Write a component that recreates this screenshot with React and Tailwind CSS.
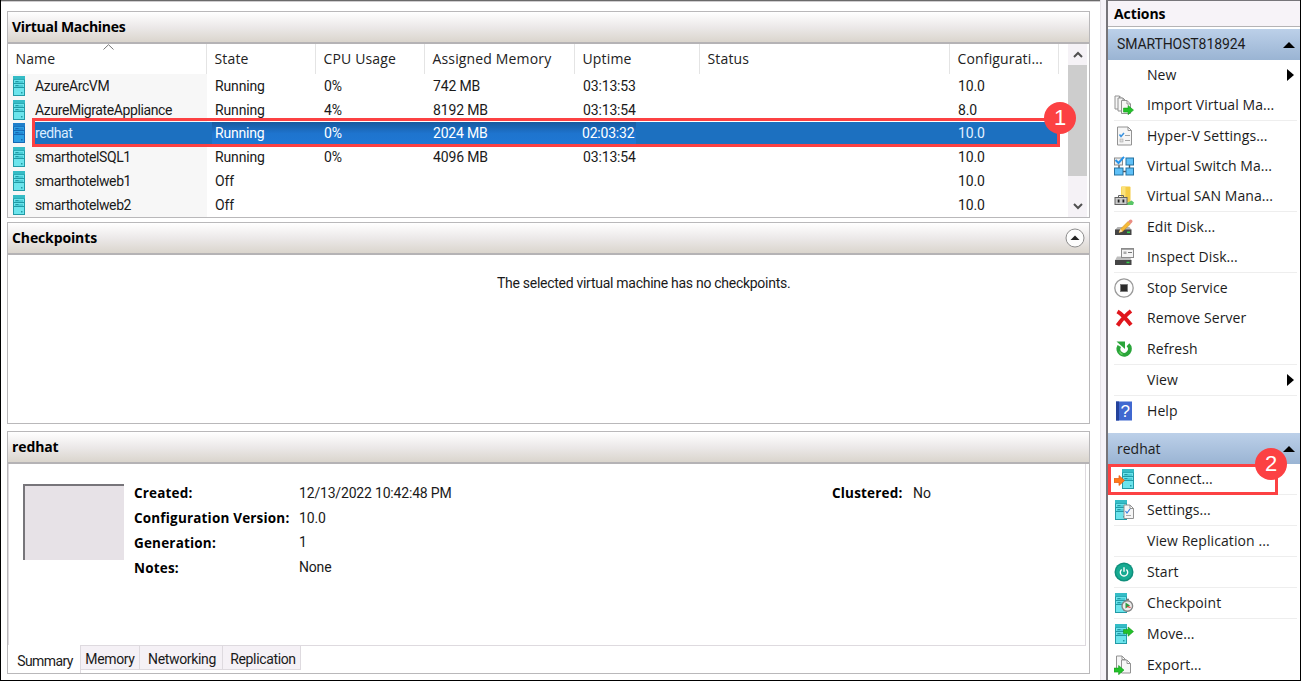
import React from "react";

const UI = "font-['Open_Sans','Noto_Sans',sans-serif]";
const GRID = "font-['Roboto','Liberation_Sans',sans-serif]";

function Server({ x = 3.5, selected = false }) {
  const body = selected ? "#2c9fe4" : "#6ce4ec";
  const top = selected ? "#1f7fcb" : "#35bcc6";
  const edge = selected ? "#1568b4" : "#229aa6";
  const slot = selected ? "#2389d4" : "#4accd6";
  return (
    <g transform={`translate(${x} 0)`}>
      <rect x="0" y="0" width="12" height="20" fill={edge} />
      <rect x="0" y="0" width="12" height="3.5" fill={top} />
      <rect x="1" y="4" width="10" height="15" fill={body} />
      <rect x="2" y="5" width="8" height="2" fill={slot} />
      <rect x="2" y="9" width="8" height="2" fill={slot} />
      <path d="M1 7.5h10M1 11.5h10" stroke={edge} strokeWidth="1" />
      <path d="M2.5 5.500h3M2.5 9.500h3" stroke={edge} strokeWidth="1" />
      <rect x="8" y="16" width="1.5" height="1.5" fill={edge} />
    </g>
  );
}

function Sheet({ x = 0, y = 0, w = 11, h = 14 }) {
  return (
    <path
      transform={`translate(${x} ${y})`}
      d={`M.5.5H${w - 4}L${w - 0.5} 4V${h - 0.5}H.5ZM${w - 4} .5V4H${w - 0.5}`}
      fill="#f6f6f6"
      stroke="#929292"
      strokeWidth="1"
    />
  );
}

const GreenArrow = ({ x, y }) => (
  <path transform={`translate(${x} ${y})`} d="M0 2.6H4.600V0L10 4.600L4.600 9.200V6.600H0Z" fill="#23c129" stroke="#139a1b" strokeWidth=".6" />
);

const ICONS = {
  import: (
    <>
      <Sheet x={0.5} y={0.5} w={9} h={14} />
      <Sheet x={3.5} y={2.5} w={9.5} h={14} />
      <Sheet x={7} y={5} w={10} h={14} />
      <GreenArrow x={9.5} y={10.500} />
    </>
  ),
  hyperv: (
    <>
      <Sheet x={3} y={0.5} w={15} h={19} />
      <path d="M5.5 8.500l1.500 2 3-3.500" fill="none" stroke="#3a93e0" strokeWidth="1.500" />
      <path d="M11 9.500h5M11 14.500h5" stroke="#a4a4a4" />
      <rect x="6" y="13" width="3" height="3" fill="#ddd" stroke="#aaa" strokeWidth=".6" />
    </>
  ),
  vswitch: (
    <>
      <path d="M9 15.500h3M15.500 9v4M5 9v4" stroke="#555" strokeWidth="1.400" />
      <rect x=".5" y="2" width="8" height="7" fill="#eee" stroke="#8b8b8b" />
      <path d="M1.500 4l3 3L10 .8" fill="none" stroke="#2593ea" strokeWidth="2" />
      <rect x="12" y="2" width="7.500" height="7" fill="#5fc0f7" stroke="#27729f" />
      <rect x=".5" y="12" width="8.500" height="7" fill="#5fc0f7" stroke="#27729f" />
      <rect x="12" y="12" width="7.500" height="7" fill="#5fc0f7" stroke="#27729f" />
    </>
  ),
  san: (
    <>
      <rect x="7" y=".5" width="9.500" height="16" rx="1" fill="#f5cc45" />
      <rect x="7.500" y=".5" width="4" height="16" fill="#fbe27c" />
      <path d="M13 17l4.500-2.500 2.500 2-1 2.500H13z" fill="#58c566" />
      <rect x="1" y="11.500" width="12" height="7" fill="#c9c9c9" stroke="#626262" />
      <path d="M4.500 11.500v-2h5v2" fill="none" stroke="#626262" />
      <path d="M4.600 13.500v3M9.400 13.500v3" stroke="#222" strokeWidth="1.800" />
    </>
  ),
  edit: (
    <>
      <path d="M3.500 10h12l2 3H1z" fill="#b3b3b3" />
      <rect x="1" y="12.500" width="16.500" height="5.500" fill="#454545" />
      <rect x="13" y="14.500" width="3" height="1.600" fill="#35d44b" />
      <path d="M5 15.500l1.500-3.500L14 4.500l2.500 2.500-8 7.500z" fill="#f6b936" stroke="#c98b1c" strokeWidth=".5" />
      <path d="M14 4.500l1.500-1.500a1.700 1.700 0 0 1 2.500 2.500L16.500 7z" fill="#ea8d83" />
      <path d="M5 15.500l1.500-3.500 2 2.500z" fill="#f6e3bd" />
    </>
  ),
  inspect: (
    <>
      <path d="M3 9.500h13l1.500 4H1z" fill="#bdbdbd" />
      <rect x="7.500" y="1.500" width="12" height="9" fill="#f5f5f5" stroke="#8b8b8b" />
      <path d="M7 2h13" stroke="#8b8b8b" strokeWidth="1.500" />
      <rect x="9.500" y="4.500" width="3" height="2.500" fill="#aaa" />
      <path d="M14 5.500h4" stroke="#777" />
      <rect x="1" y="13" width="16.500" height="5" fill="#454545" />
      <rect x="12.500" y="14.700" width="3" height="1.500" fill="#35d44b" />
    </>
  ),
  stop: (
    <>
      <circle cx="10" cy="10" r="9.200" fill="#fdfdfd" stroke="#9a9a9a" strokeWidth="1.300" />
      <rect x="6.500" y="6.500" width="7" height="7" fill="#2b2b2b" stroke="#777" strokeWidth=".8" />
    </>
  ),
  remove: <path d="M3.500 3.500C7 5.500 13 12 17 17M17 3C13 6 7 12.500 3.500 17.500" fill="none" stroke="#e0161c" strokeWidth="4" />,
  refresh: (
    <>
      <path d="M5.300 7A5.700 5.700 0 1 0 14 5.800" fill="none" stroke="#2aa53a" strokeWidth="4" />
      <path d="M2.500 2.500h8.500v7.500z" fill="#2aa53a" />
      <path d="M5.500 12.500a5 5 0 0 0 3 3" fill="none" stroke="#62cf5e" strokeWidth="1.500" />
    </>
  ),
  help: (
    <>
      <rect x="2" y=".5" width="16" height="19" fill="#4068d0" />
      <rect x="2" y=".5" width="3" height="19" fill="#24429b" />
      <text x="11.300" y="16" textAnchor="middle" fontSize="17" fontFamily="Liberation Sans" fill="#fff">?</text>
    </>
  ),
  connect: (
    <>
      <Server x={8} />
      <path d="M0 9.500H5V6.500L10.500 11.500 5 16.500V13.500H0Z" fill="#ff7a1a" stroke="#e2570c" strokeWidth=".7" />
    </>
  ),
  settings: (
    <>
      <Server x={1} />
      <Sheet x={9.500} y={4.500} w={10.500} h={14.500} />
      <path d="M11.500 11l1.500 2 3-4" fill="none" stroke="#3a80e0" strokeWidth="1.200" />
      <path d="M12 15.500h5" stroke="#aaa" />
    </>
  ),
  start: (
    <>
      <circle cx="10" cy="10" r="9.500" fill="#0f8f7c" />
      <circle cx="10" cy="10" r="8" fill="#17ab92" />
      <path d="M7.600 7.500a3.700 3.700 0 1 0 4.800 0M10 5.300v4.500" fill="none" stroke="#fff" strokeWidth="1.400" />
    </>
  ),
  checkpoint: (
    <>
      <Server x={1} />
      <circle cx="13.300" cy="13" r="5.300" fill="#ececec" stroke="#858585" strokeWidth="1.400" />
      <path d="M12 6.500h3" stroke="#777" strokeWidth="1.600" />
      <path d="M11.500 9.500v6l4.500-3z" fill="#2c9c40" />
      <path d="M13 13.500l3.500 1" stroke="#d33" strokeWidth="1.300" />
    </>
  ),
  move: (
    <>
      <Server x={1} />
      <GreenArrow x={9.500} y={3} />
    </>
  ),
  export: (
    <>
      <Sheet x={2} y={0.5} w={10} h={14} />
      <Sheet x={7} y={4.500} w={10} h={14} />
      <GreenArrow x={0} y={10.500} />
    </>
  ),
};

const Icon = ({ name }) => (
  <svg className="block h-5 w-5" viewBox="0 0 20 20">
    {ICONS[name]}
  </svg>
);

function Action({ label, icon, arrow }) {
  return (
    <div className="flex min-h-0 flex-1 items-center">
      <div className="ml-[6px] w-[33px] shrink-0">{icon && <Icon name={icon} />}</div>
      <span className="text-[14px] leading-5 tracking-[0.08px] whitespace-pre text-[#1c1c1c]">{label}</span>
      {arrow && (
        <svg className="mr-[6px] ml-auto h-3 w-[7px]" viewBox="0 0 7 12">
          <path d="M0 0L7 6L0 12Z" fill="#000" />
        </svg>
      )}
    </div>
  );
}

const Group = ({ items, height, last }) => (
  <div className={`flex shrink-0 flex-col ${height}`}>
    {items.map((item) => (
      <Action key={item.label} {...item} />
    ))}
    {!last && <div className="mr-[3px] ml-[6px] h-px shrink-0 bg-[#eeeeee]" />}
  </div>
);

const SectionTitle = ({ children, height }) => (
  <div className={`flex shrink-0 items-center justify-between bg-linear-to-b from-[#bcd0e9] to-[#9ab4d3] pr-[5px] pl-[9px] text-[14px] text-[#1c1c1c] ${height}`}>
    {children}
    <svg className="h-[6px] w-3" viewBox="0 0 12 6">
      <path d="M6 0L12 6H0Z" fill="#000" />
    </svg>
  </div>
);

const PanelTitle = ({ children, height, toggle }) => (
  <div className={`flex shrink-0 items-center justify-between border-b-2 border-[#b5b3b5] bg-linear-to-b from-white via-[#ece9e9] to-[#dad5cd] pr-[4px] pb-px pl-1 text-[14px] font-bold tracking-[-0.12px] text-black ${height}`}>
    {children}
    {toggle && (
      <svg className="h-5 w-5" viewBox="0 0 20 20">
        <circle cx="10" cy="10" r="9" fill="#fdfdfd" stroke="#8e8e8e" />
        <path d="M10 7.500L14.500 12H5.500Z" fill="#222" />
      </svg>
    )}
  </div>
);

const COLS = "grid grid-cols-[199px_109px_109px_150px_125px_250px_109px]";
const HEADINGS = ["Name", "State", "CPU Usage", "Assigned Memory", "Uptime", "Status", "Configurati..."];
const VMS = [
  ["AzureArcVM", "Running", "0%", "742 MB", "03:13:53", "", "10.0"],
  ["AzureMigrateAppliance", "Running", "4%", "8192 MB", "03:13:54", "", "8.0"],
  ["redhat", "Running", "0%", "2024 MB", "02:03:32", "", "10.0"],
  ["smarthotelSQL1", "Running", "0%", "4096 MB", "03:13:54", "", "10.0"],
  ["smarthotelweb1", "Off", "", "", "", "", "10.0"],
  ["smarthotelweb2", "Off", "", "", "", "", "10.0"],
];

const GLOW = "bg-linear-to-b from-[#175a9f] via-[#1e74ce] to-[#1f78d4] text-white";
const GLOW_SHAPES = {
  1: "ml-[5px] pl-[3px] flex-1",
  2: "pl-[8px] flex-1",
  3: "pl-[8px] flex-1",
  4: "pl-[7px] w-[61px]",
};

function VmRow({ row, selected }) {
  return (
    <div className={`h-[23.8px] ${COLS}`}>
      {row.map((cell, i) => {
        if (i === 0)
          return (
            <div key={i} className="flex items-center bg-[#f7f7f7] pl-[5px]">
              <svg className="h-5 w-[13px] shrink-0" viewBox="0 0 13 20">
                <Server x={0} selected={selected} />
              </svg>
              <span className={`ml-[6px] flex h-full flex-1 items-center pt-px pl-[3px] text-[14px] tracking-[-0.39px] ${selected ? "bg-[#1c70c0] text-[#d9ecff]" : "text-[#1a1a1a]"}`}>{cell}</span>
            </div>
          );
        if (selected && GLOW_SHAPES[i])
          return (
            <div key={i} className="flex bg-[#1c70c0]">
              <span className={`flex items-center pt-px text-[14px] tracking-[-0.2px] ${GLOW} ${GLOW_SHAPES[i]}`}>{cell}</span>
            </div>
          );
        return (
          <div key={i} className={`flex items-center pt-px pl-[8px] text-[14px] tracking-[-0.15px] ${selected ? "bg-[#1c70c0] text-[#e3f1ff]" : "text-[#1a1a1a]"}`}>
            {cell}
          </div>
        );
      })}
    </div>
  );
}

const Badge = ({ children, place }) => (
  <div className={`absolute flex h-8 w-8 items-center justify-center rounded-full bg-[#fc4143] font-['Liberation_Sans',sans-serif] text-[22px] leading-none text-white ${place}`}>
    {children}
  </div>
);

const Chevron = ({ down }) => (
  <svg className="h-[7px] w-[10px]" viewBox="0 0 10 7">
    <path d={down ? "M1 1L5 5L9 1" : "M1 6L5 2L9 6"} fill="none" stroke="#505050" strokeWidth="2" />
  </svg>
);

const DETAILS = [
  ["Created:", "12/13/2022 10:42:48 PM"],
  ["Configuration Version:", "10.0"],
  ["Generation:", "1"],
  ["Notes:", "None"],
];

const TAB = "flex h-[24px] items-center justify-center border-r border-b border-[#dedadf] bg-[#f5f1f6] pt-[3px]";

const MAIN_ACTIONS = [
  { height: "h-[61px]", items: [{ label: "New", arrow: true }, { label: "Import Virtual Ma...", icon: "import" }] },
  {
    height: "h-[91px]",
    items: [
      { label: "Hyper-V Settings...", icon: "hyperv" },
      { label: "Virtual Switch Ma...", icon: "vswitch" },
      { label: "Virtual SAN Mana...", icon: "san" },
    ],
  },
  { height: "h-[61px]", items: [{ label: "Edit Disk...", icon: "edit" }, { label: "Inspect Disk...", icon: "inspect" }] },
  {
    height: "h-[92px]",
    items: [
      { label: "Stop Service", icon: "stop" },
      { label: "Remove Server", icon: "remove" },
      { label: "Refresh", icon: "refresh" },
    ],
  },
  { height: "h-[31px]", items: [{ label: "View", arrow: true }] },
  { height: "h-[37px] pb-[7px]", last: true, items: [{ label: "Help", icon: "help" }] },
];

const VM_ACTIONS = [
  { height: "h-[31px]", items: [{ label: "Connect...", icon: "connect" }] },
  { height: "h-[31px]", items: [{ label: "Settings...", icon: "settings" }] },
  { height: "h-[31px]", items: [{ label: "View Replication ..." }] },
  { height: "h-[31px]", items: [{ label: "Start", icon: "start" }] },
  { height: "h-[31px]", items: [{ label: "Checkpoint", icon: "checkpoint" }] },
  { height: "h-[61px]", last: true, items: [{ label: "Move...", icon: "move" }, { label: "Export...", icon: "export" }] },
];

export default function App() {
  return (
    <div className={`relative flex h-[681px] w-[1301px] overflow-hidden border-r border-b border-l border-black bg-white ${UI}`}>
      <main className="flex w-[1099px] shrink-0 flex-col border-t border-[#6a6a6a] pl-[6px]">
        <div className="-ml-[6px] h-px shrink-0 bg-[#cfcdcf]" />

        <section className="mt-[9px] flex h-[207px] w-[1083px] shrink-0 flex-col border border-[#b9b8ba]">
          <PanelTitle height="h-8"><span className="tracking-[-0.3px]">Virtual Machines</span></PanelTitle>
          <div className="flex min-h-0 flex-1">
            <div className="relative w-[1060px] shrink-0 overflow-hidden">
              <div className={`h-[30px] ${COLS}`}>
                {HEADINGS.map((h, i) => (
                  <div key={h} className="flex items-center border-r border-[#e4e4e4] pb-[2px] pl-[7.500px] text-[14px] tracking-[0.15px] text-[#222]">
                    {h}
                  </div>
                ))}
              </div>
              <svg className="absolute top-0 left-[95px] h-[6px] w-[11px]" viewBox="0 0 11 6">
                <path d="M.5 5.500L5.500 .7L10.500 5.500" fill="none" stroke="#777" />
              </svg>
              <div className={GRID}>
                {VMS.map((row) => (
                  <VmRow key={row[0]} row={row} selected={row[0] === "redhat"} />
                ))}
              </div>
            </div>
            <div className="mr-[2px] ml-auto flex w-[19px] flex-col items-center bg-[#f5f2f6]">
              <div className="flex h-[21px] items-center"><Chevron /></div>
              <div className="h-[111px] w-full bg-[#cdcdcd]" />
              <div className="mt-auto flex h-[21px] items-center"><Chevron down /></div>
            </div>
          </div>
        </section>

        <section className="mt-1 flex h-[202px] w-[1083px] shrink-0 flex-col border border-[#b9b8ba]">
          <PanelTitle height="h-8" toggle>Checkpoints</PanelTitle>
          <p className={`mt-[18px] pl-[489px] text-[14px] leading-5 tracking-[-0.28px] text-[#1a1a1a] ${GRID}`}>The selected virtual machine has no checkpoints.</p>
        </section>

        <section className="mt-[7px] flex h-[243px] w-[1083px] shrink-0 flex-col border border-[#b9b8ba]">
          <PanelTitle height="h-8">redhat</PanelTitle>
          <div className="mr-[3px] flex h-[182px] shrink-0 border-r border-b border-l border-[#dedadf] pt-[16px]">
            <div className="mt-[4px] ml-[14px] h-[76px] w-[101px] border-t-2 border-l-2 border-[#77757a] bg-[#e7e2e7]" />
            <dl className="ml-[10px] grid h-[100px] w-[698px] grid-cols-[165px_1fr] grid-rows-4 items-center pt-px">
              {DETAILS.map(([k, v]) => (
                <React.Fragment key={k}>
                  <dt className="text-[13.500px] font-bold tracking-[0.18px] text-black">{k}</dt>
                  <dd className={`text-[14px] tracking-[-0.18px] text-[#1a1a1a] ${GRID}`}>{v}</dd>
                </React.Fragment>
              ))}
            </dl>
            <dl className="flex h-[26px] items-center">
              <dt className="w-[81px] text-[13.500px] font-bold tracking-[0.18px] text-black">Clustered:</dt>
              <dd className={`text-[14px] text-[#1a1a1a] ${GRID}`}>No</dd>
            </dl>
          </div>
          <div className={`flex text-[14px] tracking-[-0.35px] text-[#1a1a1a] ${GRID}`}>
            <div className="-mt-px flex h-[28px] w-[73px] items-center justify-center border-r border-[#dedadf] bg-white pt-1 pl-[2px] tracking-[-0.6px]">Summary</div>
            <div className={`${TAB} w-[59px]`}>Memory</div>
            <div className={`${TAB} w-[83px] pl-[2px]`}>Networking</div>
            <div className={`${TAB} w-[78px] pl-[3px]`}>Replication</div>
          </div>
        </section>
      </main>

      <div className="w-[6px] shrink-0 border-l border-[#e6e3e8] bg-[#f6f3f8]" />

      <aside className="flex min-w-0 flex-1 flex-col border-t border-l-2 border-[#77757a]">
        <div className="flex h-[26px] shrink-0 items-center border-b border-[#b5b3b5] bg-[#f7f3f8] pl-[6px] text-[14px] font-bold tracking-[-0.1px] text-black">Actions</div>
        <div className="h-[2px] shrink-0 bg-white" />
        <SectionTitle height="h-[31px]"><span className={`tracking-[-0.1px] ${GRID}`}>SMARTHOST818924</span></SectionTitle>
        {MAIN_ACTIONS.map((g) => (
          <Group key={g.items[0].label} {...g} />
        ))}
        <SectionTitle height="h-[31px]">redhat</SectionTitle>
        {VM_ACTIONS.map((g) => (
          <Group key={g.items[0].label} {...g} />
        ))}
      </aside>

      <div className="absolute top-[118px] left-[31px] h-[29px] w-[1028px] border-3 border-[#fc4143]" />
      <Badge place="top-[102px] left-[1043px]">1</Badge>
      <div className="absolute top-[464px] left-[1107px] h-[31px] w-[170px] border-3 border-[#fc4143]" />
      <Badge place="top-[448px] left-[1254px]">2</Badge>
    </div>
  );
}
